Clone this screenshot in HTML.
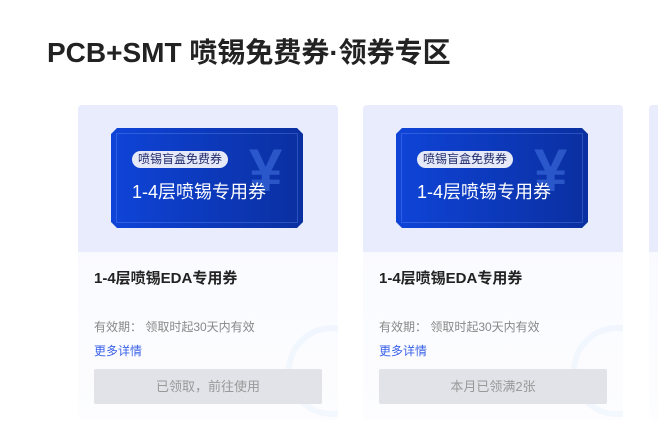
<!DOCTYPE html>
<html><head><meta charset="utf-8"><style>
body{margin:0;width:658px;height:446px;background:#fff;font-family:"Liberation Sans","Noto Sans CJK SC",sans-serif;overflow:hidden;position:relative}
h1{position:absolute;left:47px;top:31px;margin:0;font-size:28px;font-weight:bold;color:#222;letter-spacing:0}
.card{position:absolute;top:105px;width:260px;height:315px;border-radius:4px;overflow:hidden;background:linear-gradient(#f6f8ff,#fdfdff)}
.top{height:147px;background:#e8ecfc;position:relative}
.cp{position:absolute;left:33px;top:23px;width:192px;height:100px;background:linear-gradient(90deg,#0f44d8,#0a2fa0);clip-path:polygon(6px 0,186px 0,192px 6px,192px 94px,186px 100px,6px 100px,0 94px,0 6px)}
.cp .in{position:absolute;left:5px;top:5px;right:5px;bottom:5px;border:1px solid rgba(120,160,255,.3)}
.tag{position:absolute;left:21px;top:23px;background:#e6e9f8;color:#1f2a6a;font-size:12px;padding:0 6px;height:17px;line-height:17px;border-radius:9px}
.big{position:absolute;left:21px;top:50px;color:#fff;font-size:18px}
.yen{position:absolute;left:138px;top:8px;color:rgba(80,130,240,.45);font-size:60px;font-weight:bold}
.t{position:absolute;left:16px;top:162px;font-size:15px;font-weight:bold;color:#222}
.v{position:absolute;left:16px;top:213px;font-size:12px;color:#888}
.m{position:absolute;left:16px;top:237px;font-size:12px;color:#3a62e8}
.b{position:absolute;left:16px;top:264px;width:228px;height:35px;background:#e1e3e8;border-radius:2px;color:#999;font-size:13px;text-align:center;line-height:35px}
.ring{position:absolute;right:-40px;top:220px;width:80px;height:80px;border-radius:50%;border:6px solid rgba(200,225,250,.18)}
</style></head><body>
<h1>PCB+SMT 喷锡免费券·领券专区</h1>
<div class="card" style="left:78px"><div class="top"><div class="cp"><div class="in"></div><div class="yen">¥</div><div class="tag">喷锡盲盒免费券</div><div class="big">1-4层喷锡专用券</div></div></div>
<div class="ring"></div>
<div class="t">1-4层喷锡EDA专用券</div><div class="v">有效期：&nbsp;领取时起30天内有效</div><div class="m">更多详情</div><div class="b">已领取，前往使用</div></div>
<div class="card" style="left:363px"><div class="top"><div class="cp"><div class="in"></div><div class="yen">¥</div><div class="tag">喷锡盲盒免费券</div><div class="big">1-4层喷锡专用券</div></div></div>
<div class="ring"></div>
<div class="t">1-4层喷锡EDA专用券</div><div class="v">有效期：&nbsp;领取时起30天内有效</div><div class="m">更多详情</div><div class="b">本月已领满2张</div></div>
<div class="card" style="left:649px"><div class="top"></div></div>
</body></html>
